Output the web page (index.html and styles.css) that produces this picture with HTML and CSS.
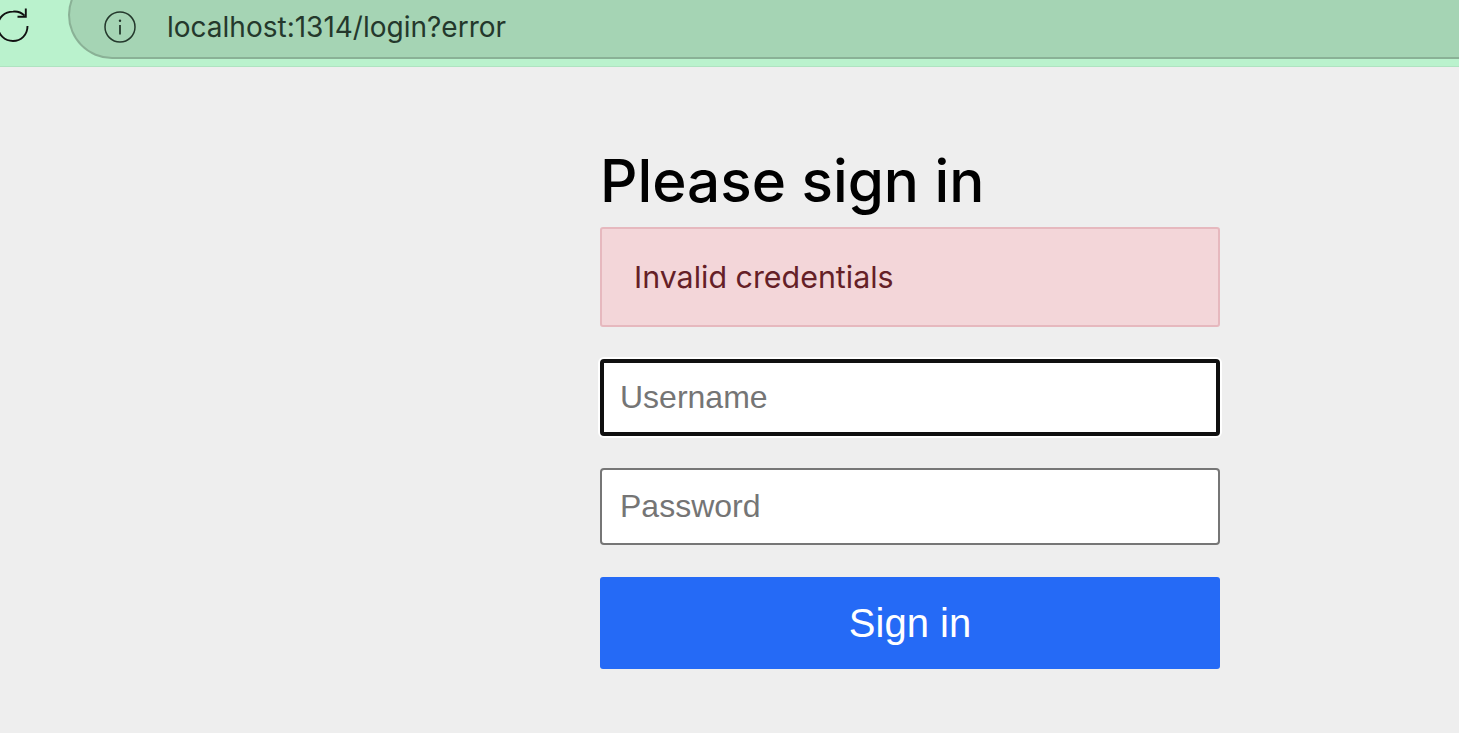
FILE: index.html
```html
<!DOCTYPE html>
<html lang="en">
<head>
<meta charset="utf-8">
<title>Please sign in</title>
<link rel="stylesheet" href="styles.css">
</head>
<body>
<header class="toolbar">
	<svg class="reload" width="30" height="34" viewBox="0 0 30 34" fill="none" stroke="#111" stroke-width="1.900">
		<path d="M24.600 9.600A14.600 14.600 0 0 0 13 5.600C5 5.600 -2 11 -2 20s7 15 15 15 14.500-6 14.500-15"/>
		<path d="M25.800 2.500v8.300h-8.300"/>
	</svg>
	<div class="address">
		<svg class="info" width="32" height="32" viewBox="0 0 32 32" fill="none" stroke="#24382c" stroke-width="1.500">
			<circle cx="16" cy="16" r="15"/>
			<path d="M16 14v9.500" stroke-width="1.800"/>
			<circle cx="16" cy="9.800" r="1.200" fill="#24382c" stroke="none"/>
		</svg>
		<span class="url">localhost:1314/login?error</span>
	</div>
</header>
<main class="content">
	<form class="signin">
		<h1>Please sign in</h1>
		<div class="alert">Invalid credentials</div>
		<input class="field focused" type="text" placeholder="Username">
		<input class="field" type="password" placeholder="Password">
		<button class="submit" type="button">Sign in</button>
	</form>
</main>
</body>
</html>
```

FILE: styles.css
```css
html, body { margin: 0; height: 100%; overflow: hidden; }
body { background: #eeeeee; font-family: "Inter", "Liberation Sans", sans-serif; }

.toolbar { height: 66px; background: #baf2cd; border-bottom: 1px solid #afe3c1; display: flex; align-items: flex-end; overflow: hidden; }
.reload { flex: none; align-self: flex-start; margin-top: 6px; margin-right: 38px; overflow: visible; width: 30px; }
.address { flex: 1; height: 88px; margin-bottom: 7px; box-sizing: border-box; padding: 0 0 14px 34px; background: #a5d4b4; border: 2px solid #8ab196; border-right: 0; border-radius: 46px 0 0 46px; display: flex; align-items: flex-end; margin-top: -30px; }
.info { flex: none; }
.url { margin-left: 31px; font-size: 28px; line-height: 32px; color: #24382c; white-space: nowrap; }

.content { padding: 80px 0 0 600px; }
.signin { width: 620px; display: flex; flex-direction: column; }
h1 { margin: 0 0 12px; font-size: 58.400px; font-weight: 500; line-height: 68px; color: #000; }
.alert { height: 100px; box-sizing: border-box; padding: 0 32px; display: flex; align-items: center; background: #f3d6d9; border: 2px solid #e6b8be; border-radius: 3px; font-size: 30.400px; color: #651f27; margin-bottom: 32px; }
.field { height: 77px; box-sizing: border-box; padding: 0 18px; background: #fff; border: 2px solid #767676; border-radius: 4px; font-family: "Liberation Sans", sans-serif; font-size: 32px; margin-bottom: 32px; }
.field::placeholder { color: #757575; opacity: 1; }
.field.focused { border: 4px solid #101010; padding: 0 16px; box-shadow: 0 0 0 2px #fff; }
.submit { height: 92px; background: #256af6; border: 0; border-radius: 3px; color: #fff; font-family: "Liberation Sans", sans-serif; font-size: 40px; }
```
